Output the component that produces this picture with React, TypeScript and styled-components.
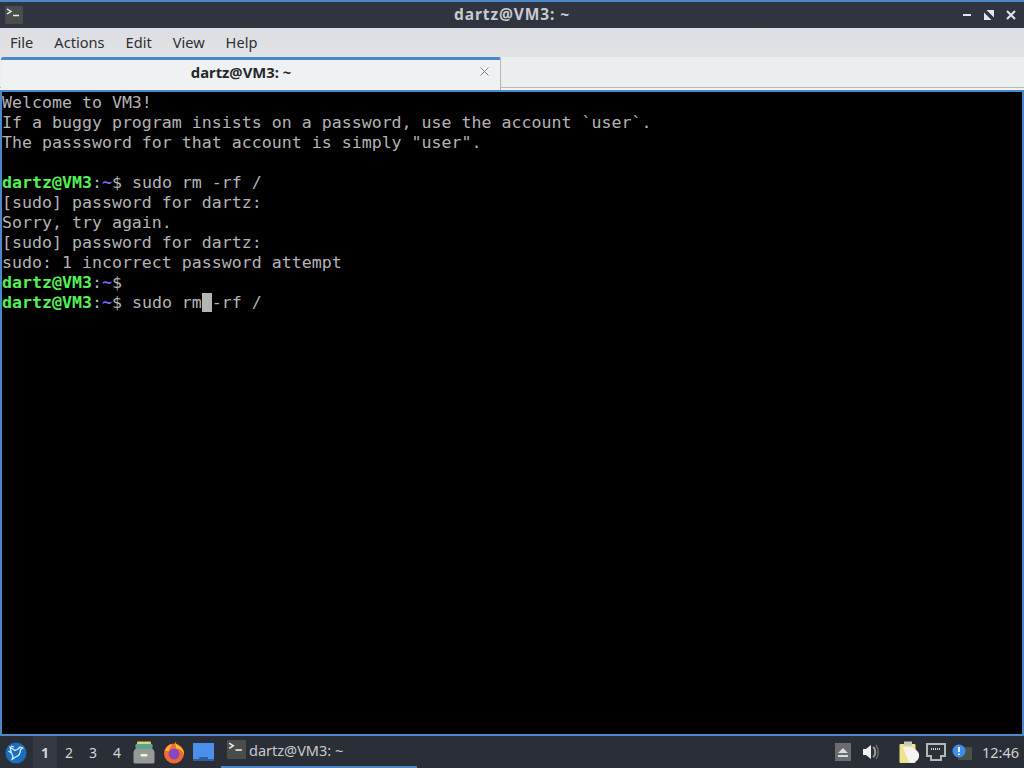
import styled, { createGlobalStyle } from "styled-components"

const GlobalStyle = createGlobalStyle`
    html, body {
        margin: 0;
        padding: 0;
        width: 1024px;
        height: 768px;
        overflow: hidden;
        background: #000;
    }
`

type Part = { text: string; kind?: "user" | "path" }
const prompt: Array<Part> = [{ text: "dartz@VM3", kind: "user" }, { text: ":" }, { text: "~", kind: "path" }, { text: "$" }]
const lines: Array<Array<Part>> = [
    [{ text: "Welcome to VM3!" }],
    [{ text: "If a buggy program insists on a password, use the account `user`." }],
    [{ text: 'The passsword for that account is simply "user".' }],
    [],
    [...prompt, { text: " sudo rm -rf /" }],
    [{ text: "[sudo] password for dartz:" }],
    [{ text: "Sorry, try again." }],
    [{ text: "[sudo] password for dartz:" }],
    [{ text: "sudo: 1 incorrect password attempt" }],
    [...prompt],
]
const menuItems: Array<string> = ["File", "Actions", "Edit", "View", "Help"]
const desktops: Array<string> = ["1", "2", "3", "4"]

const TerminalIcon = ({ size }: { size: number }) => (
    <svg width={size} height={size} viewBox="0 0 18 18">
        <rect width="18" height="18" rx="1" fill="#4b4d4d" />
        <path d="M2 3 L6 5.5 L2 8" fill="none" stroke="#eeeeee" strokeWidth="1.4" />
        <path d="M8 9.5 H14" stroke="#eeeeee" strokeWidth="1.5" />
    </svg>
)

export default function App() {
    return (
        <Screen>
            <GlobalStyle />
            <TitleBar>
                <TerminalIcon size={18} />
                <WindowTitle>dartz@VM3: ~</WindowTitle>
                <WindowButtons>
                    <svg width="10" height="10" viewBox="0 0 10 10"><path d="M1 5 H9" stroke="#e4e6ea" strokeWidth="2" /></svg>
                    <svg width="10" height="10" viewBox="0 0 10 10"><path d="M0 2.5 V10 H7.5 Z M10 7.5 V0 H2.5 Z" fill="#e4e6ea" /></svg>
                    <svg width="10" height="10" viewBox="0 0 10 10"><path d="M1 1 L9 9 M9 1 L1 9" stroke="#e4e6ea" strokeWidth="2" /></svg>
                </WindowButtons>
            </TitleBar>
            <MenuBar>
                {menuItems.map((item) => <MenuItem key={item}>{item}</MenuItem>)}
            </MenuBar>
            <TabBar>
                <ActiveTab>
                    <TabTitle>dartz@VM3: ~</TabTitle>
                    <svg width="9" height="9" viewBox="0 0 9 9"><path d="M0.5 0.5 L8.5 8.5 M8.5 0.5 L0.5 8.5" stroke="#7d7f82" strokeWidth="1" /></svg>
                </ActiveTab>
            </TabBar>
            <Terminal>
                {lines.map((line, ind) => (
                    <Line key={ind}>
                        {line.map((part, i) => <Chunk key={i} $kind={part.kind}>{part.text}</Chunk>)}
                    </Line>
                ))}
                <Line>
                    {prompt.map((part, i) => <Chunk key={i} $kind={part.kind}>{part.text}</Chunk>)}
                    <Chunk> sudo rm</Chunk><Cursor> </Cursor><Chunk>-rf /</Chunk>
                </Line>
            </Terminal>
            <Panel>
                <PanelGroup>
                    <StartButton>
                        <svg width="22" height="22" viewBox="0 0 22 22">
                            <circle cx="11" cy="11" r="10.5" fill="#1b6fc0" />
                            <path d="M5 5 L10 8.5 L13 7 L15 5 L18 6 L15.5 7.5 C15.5 11 14 14 10.5 15 L7 17.5 L8 14.5 C6.5 12 5.5 8 5 5 Z M3.5 9 L7 11.5 M6 4 L9 5" fill="none" stroke="#dcecf8" strokeWidth="1.3" strokeLinejoin="round" />
                        </svg>
                    </StartButton>
                    <Desktops>
                        {desktops.map((d, ind) => <Desktop key={d} $active={ind === 0}>{d}</Desktop>)}
                    </Desktops>
                    <Launchers>
                        <svg width="22" height="23" viewBox="0 0 22 23">
                            <rect x="4" y="0.5" width="14" height="3" rx="1" fill="#e2d27e" />
                            <rect x="2.5" y="3" width="17" height="5" rx="1" fill="#5aa68c" />
                            <path d="M2 8 H20 L21.5 11 V21 Q21.5 22.5 20 22.5 H2 Q0.5 22.5 0.5 21 V11 Z" fill="#989a96" />
                            <rect x="7.5" y="13" width="7" height="2.5" rx="1" fill="#f2f2f2" />
                        </svg>
                        <svg width="22" height="23" viewBox="0 0 22 23">
                            <circle cx="11" cy="12.5" r="10" fill="#f26a2c" />
                            <circle cx="11" cy="13" r="5.5" fill="#8748c4" />
                            <path d="M12 0.5 C13 3 14 4 16 5 C19 7 21.5 10 21 14 C20 10 17 7.5 13 7.5 C13 5 12 3 12 0.5 Z" fill="#fcc11f" />
                            <path d="M2 10 C3 6 6 3.5 9 3 C8 5 6.5 7 6 10 Z" fill="#fbb03b" />
                        </svg>
                        <svg width="21" height="18" viewBox="0 0 21 18">
                            <path d="M0 0 H21 V16 H15 L14 14 H7 L6 16 H0 Z" fill="#4a90ea" />
                            <path d="M0 16 H6 L7 14 H14 L15 16 H21 V18 H0 Z" fill="#2f5f9c" />
                        </svg>
                    </Launchers>
                    <TaskButton>
                        <TerminalIcon size={19} />
                        <TaskLabel>dartz@VM3: ~</TaskLabel>
                    </TaskButton>
                </PanelGroup>
                <Tray>
                    <EjectBox>
                        <svg width="10" height="9" viewBox="0 0 10 9"><path d="M5 0 L10 5 H0 Z M0 7 H10 V9 H0 Z" fill="#dcdcdc" /></svg>
                    </EjectBox>
                    <VolumeIcon>
                        <svg width="17" height="16" viewBox="0 0 17 16">
                            <path d="M0 5 H3 L8 1 V15 L3 11 H0 Z" fill="#f2f2f2" />
                            <path d="M10 3 C13 5 13 11 10 13" fill="none" stroke="#9a9a9a" strokeWidth="2" />
                            <path d="M13 1 C16 5 16 11 13 15" fill="none" stroke="#6b6b6b" strokeWidth="1.5" />
                        </svg>
                    </VolumeIcon>
                    <TrayIcons>
                        <svg width="21" height="23" viewBox="0 0 21 23">
                            <rect x="0.5" y="3" width="16" height="19" rx="1" fill="#efe28e" />
                            <rect x="5" y="0.5" width="8" height="4" fill="#c9c9c0" />
                            <path d="M4 6 H12 C17 8 21 11 20 16 C19 20 15 22 11 22 C8 18 6 11 4 6 Z" fill="#f3f3f1" />
                        </svg>
                        <svg width="20" height="18" viewBox="0 0 20 18">
                            <path d="M1 1 H19 V13 H15 V17 H5 V13 H1 Z" fill="#2f3138" stroke="#b4b6b8" strokeWidth="2" />
                            <path d="M5 6 H15" stroke="#d8d8d8" strokeWidth="2" strokeDasharray="1 1" />
                        </svg>
                        <svg width="20" height="17" viewBox="0 0 20 17">
                            <rect x="6" y="3" width="14" height="13" fill="#4a5048" />
                            <circle cx="7" cy="7" r="6.5" fill="#3f8fe8" />
                            <path d="M7 3 V8 M7 9.5 V11" stroke="#fff" strokeWidth="1.8" />
                        </svg>
                    </TrayIcons>
                    <Clock>12:46</Clock>
                </Tray>
            </Panel>
        </Screen>
    )
}

const Screen = styled.div`
    width: 1024px;
    height: 768px;
    display: flex;
    flex-direction: column;
    overflow: hidden;
    background: #2f343f;
    font-family: "Noto Sans", "Open Sans", sans-serif;
`
const TitleBar = styled.header`
    height: 26px;
    flex: none;
    border-top: 2px solid #4a88c9;
    background: #2f343f;
    display: flex;
    align-items: center;
    padding: 0 8px 0 5px;
    position: relative;
`
const WindowTitle = styled.div`
    position: absolute;
    left: 0;
    right: 0;
    top: 2px;
    line-height: 20px;
    text-align: center;
    color: #c8cbd0;
    font-size: 15.5px;
    font-weight: 700;
    letter-spacing: 0.9px;
`
const WindowButtons = styled.div`
    margin-left: auto;
    display: flex;
    align-items: center;
    gap: 12px;
`
const MenuBar = styled.nav`
    height: 29px;
    flex: none;
    box-sizing: border-box;
    padding: 0 0 2px 2px;
    background: linear-gradient(180deg, #dcdee3 0%, #e2e3e5 100%);
    display: flex;
    align-items: center;
`
const MenuItem = styled.div`
    padding: 0 8px;
    margin-right: 5px;
    font-size: 14.6px;
    color: #2d2f33;
`
const TabBar = styled.div`
    height: 33px;
    flex: none;
    box-sizing: border-box;
    background: linear-gradient(180deg, #ecedef 0 30px, #b8b9bb 30px 31px, #f0f1f2 31px);
    display: flex;
    align-items: stretch;
`
const ActiveTab = styled.div`
    width: 500px;
    margin-left: 1px;
    box-sizing: border-box;
    height: 33px;
    background: #f0f1f2;
    border-top: 3px solid #4a88c9;
    border-right: 1px solid #b8b9bb;
    border-radius: 2px 2px 0 0;
    display: flex;
    align-items: center;
    padding: 0 11px 7px 0;
    position: relative;
`
const TabTitle = styled.div`
    flex: 1;
    text-align: center;
    margin-left: 11px;
    padding-right: 10px;
    font-size: 14.8px;
    font-weight: 700;
    color: #26282c;
`
const Terminal = styled.main`
    flex: 1;
    min-height: 0;
    background: #000;
    border: 2px solid #4a88c9;
    padding: 1px 0 0;
    font-family: "DejaVu Sans Mono", monospace;
    font-size: 16.6px;
    line-height: 20px;
    color: #b4b4b4;
`
const Line = styled.div`
    height: 20px;
    white-space: pre;
`
const Chunk = styled.span<{ $kind?: "user" | "path" }>`
    font-weight: ${({ $kind }) => ($kind ? 700 : 400)};
    color: ${({ $kind }) => ($kind === "user" ? "#55f055" : $kind === "path" ? "#6a6af5" : "#b4b4b4")};
`
const Cursor = styled.span`
    background: #b4b4b4;
`
const Panel = styled.footer`
    height: 32px;
    flex: none;
    background: #2a2e36;
    display: flex;
    align-items: center;
    justify-content: space-between;
`
const PanelGroup = styled.div`
    display: flex;
    align-items: center;
    height: 100%;
`
const StartButton = styled.div`
    width: 22px;
    margin-left: 5px;
    margin-top: 1px;
    display: flex;
`
const Desktops = styled.div`
    display: flex;
    margin-left: 6px;
    height: 100%;
`
const Desktop = styled.div<{ $active?: boolean }>`
    width: 24px;
    display: flex;
    align-items: center;
    justify-content: center;
    font-size: 14px;
    font-weight: ${({ $active }) => ($active ? 700 : 400)};
    color: #d4d6d9;
    background: ${({ $active }) => ($active ? "#343842" : "transparent")};
`
const Launchers = styled.div`
    display: flex;
    align-items: center;
    gap: 8px;
    margin-left: 4px;
`
const TaskButton = styled.div`
    width: 196px;
    height: 100%;
    box-sizing: border-box;
    margin-left: 7px;
    padding: 0 0 3px 6px;
    border-bottom: 2px solid #4a88c9;
    display: flex;
    align-items: center;
    gap: 3px;
`
const TaskLabel = styled.span`
    font-size: 14.5px;
    color: #c8cacd;
`
const Tray = styled.div`
    display: flex;
    align-items: center;
    height: 100%;
    padding-right: 5px;
`
const EjectBox = styled.div`
    width: 16px;
    height: 18px;
    background: #6a6c6f;
    display: flex;
    align-items: center;
    justify-content: center;
`
const VolumeIcon = styled.div`
    margin-left: 12px;
    display: flex;
`
const TrayIcons = styled.div`
    display: flex;
    align-items: center;
    gap: 6px;
    margin-left: 19px;
`
const Clock = styled.div`
    margin-left: 10px;
    font-size: 14.5px;
    color: #d0d2d5;
`
